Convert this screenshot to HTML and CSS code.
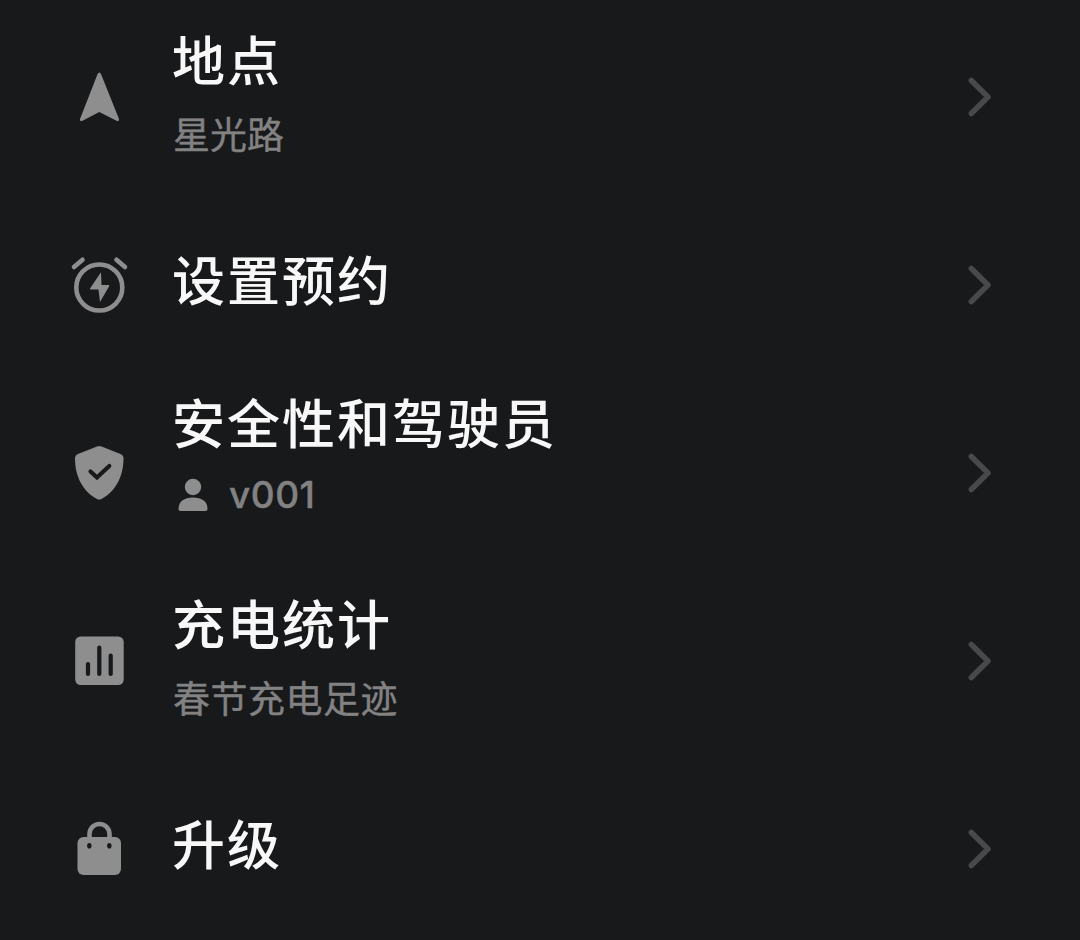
FILE: index.html
```
<!DOCTYPE html>
<html lang="zh-CN">
<head>
    <meta charset="UTF-8">
    <meta name="viewport" content="width=device-width, initial-scale=1.0">
    <title>车辆菜单</title>
    <link rel="stylesheet" href="styles.css">
</head>
<body>
    <ul class="menu">
        <li class="item">
            <svg class="icon" viewBox="0 0 60 60"><path d="M28.6 7Q30.300 4 32 7L50 52Q50.500 55 47.500 53.800L30.300 45L13.500 53.800Q10.500 55 11 52Z"/></svg>
            <div class="text">
                <div class="title">地点</div>
                <div class="sub">星光路</div>
            </div>
            <svg class="arrow" viewBox="0 0 24 40"><path d="M3.300 3.500L20 20L3.300 36.500"/></svg>
        </li>
        <li class="item">
            <svg class="icon" viewBox="0 0 60 60">
                <circle class="line" cx="30.300" cy="32.500" r="23"/>
                <path class="line" d="M5 12L13.500 4.700M56 12L47.500 4.700"/>
                <path d="M32 17.300L21 33.500Q20.800 34.500 22 34.500H29.500L31 47L40.300 31Q40.500 30 39.500 30H32.500Z"/>
            </svg>
            <div class="text">
                <div class="title">设置预约</div>
            </div>
            <svg class="arrow" viewBox="0 0 24 40"><path d="M3.300 3.500L20 20L3.300 36.500"/></svg>
        </li>
        <li class="item">
            <svg class="icon" viewBox="0 0 60 60">
                <path d="M28 3.500Q30.300 2.500 32.600 3.500L51.500 11Q54.500 12.300 54.500 15.500C54.500 34 46 49 32.500 56Q30.300 57.200 28 56C14.500 49 6 34 6 15.500Q6 12.300 9 11Z"/>
                <path class="cut" d="M21.500 28.500L28 34.500L40.300 23"/>
            </svg>
            <div class="text raised">
                <div class="title">安全性和驾驶员</div>
                <div class="sub driver">
                    <svg class="person" viewBox="0 0 30 34"><circle cx="15" cy="9" r="8.200"/><path d="M2.500 33Q.5 33 .5 31C.5 23.500 6 19.500 15 19.500S29.500 23.500 29.500 31Q29.500 33 27.500 33Z"/></svg>
                    <span>v001</span>
                </div>
            </div>
            <svg class="arrow" viewBox="0 0 24 40"><path d="M3.300 3.500L20 20L3.300 36.500"/></svg>
        </li>
        <li class="item">
            <svg class="icon" viewBox="0 0 60 60">
                <rect x="6.200" y="5.500" width="48.500" height="48.500" rx="5.500"/>
                <path class="cut" d="M19 33V43M30.300 16.500V43M41.700 24.500V43"/>
            </svg>
            <div class="text">
                <div class="title">充电统计</div>
                <div class="sub wide">春节充电足迹</div>
            </div>
            <svg class="arrow" viewBox="0 0 24 40"><path d="M3.300 3.500L20 20L3.300 36.500"/></svg>
        </li>
        <li class="item">
            <svg class="icon" viewBox="0 0 60 60">
                <path class="line" d="M20.500 20V15A10 10 0 0 1 40.500 15V20"/>
                <rect x="8.500" y="18" width="43.500" height="38" rx="6"/>
                <ellipse class="hole" cx="20.300" cy="26.700" rx="2.200" ry="2.800"/>
                <ellipse class="hole" cx="40.300" cy="26.700" rx="2.200" ry="2.800"/>
            </svg>
            <div class="text">
                <div class="title">升级</div>
            </div>
            <svg class="arrow" viewBox="0 0 24 40"><path d="M3.300 3.500L20 20L3.300 36.500"/></svg>
        </li>
    </ul>
</body>
</html>
```

FILE: styles.css
```
body {
    margin: 0;
    background: #18191b;
    font-family: Inter, "Noto Sans CJK SC", sans-serif;
}
.menu {
    margin: 0;
    padding: 3px 0 0;
    list-style: none;
}
.item {
    display: flex;
    align-items: center;
    height: 188px;
    padding: 0 88px 0 69px;
}
.icon {
    width: 60px;
    height: 60px;
    margin-right: 43px;
    fill: #8e8e8f;
}
.text {
    flex: 1;
    padding-bottom: 6px;
}
.raised {
    padding-bottom: 40px;
}
.title {
    font-size: 53px;
    line-height: 83px;
    font-weight: 500;
    letter-spacing: 2px;
    color: #f8f8f9;
}
.sub {
    padding-left: 1px;
    font-size: 37px;
    line-height: 64px;
    color: #828283;
    -webkit-text-stroke: 0.4px #828283;
}
.wide {
    letter-spacing: 0.5px;
}
.driver {
    display: flex;
    align-items: center;
    line-height: 56px;
    font-weight: 500;
    letter-spacing: 0.5px;
}
.person {
    width: 30px;
    height: 34px;
    margin: 0 21px 0 5px;
    fill: #8e8e8f;
}
.line {
    fill: none;
    stroke: #8e8e8f;
    stroke-width: 4.6;
    stroke-linecap: round;
}
.cut {
    fill: none;
    stroke: #18191b;
    stroke-width: 4.2;
    stroke-linecap: round;
}
.hole {
    fill: #18191b;
}
.arrow {
    width: 24px;
    height: 40px;
    fill: none;
    stroke: #48494b;
    stroke-width: 5.5;
    stroke-linecap: round;
    stroke-linejoin: round;
}
```
